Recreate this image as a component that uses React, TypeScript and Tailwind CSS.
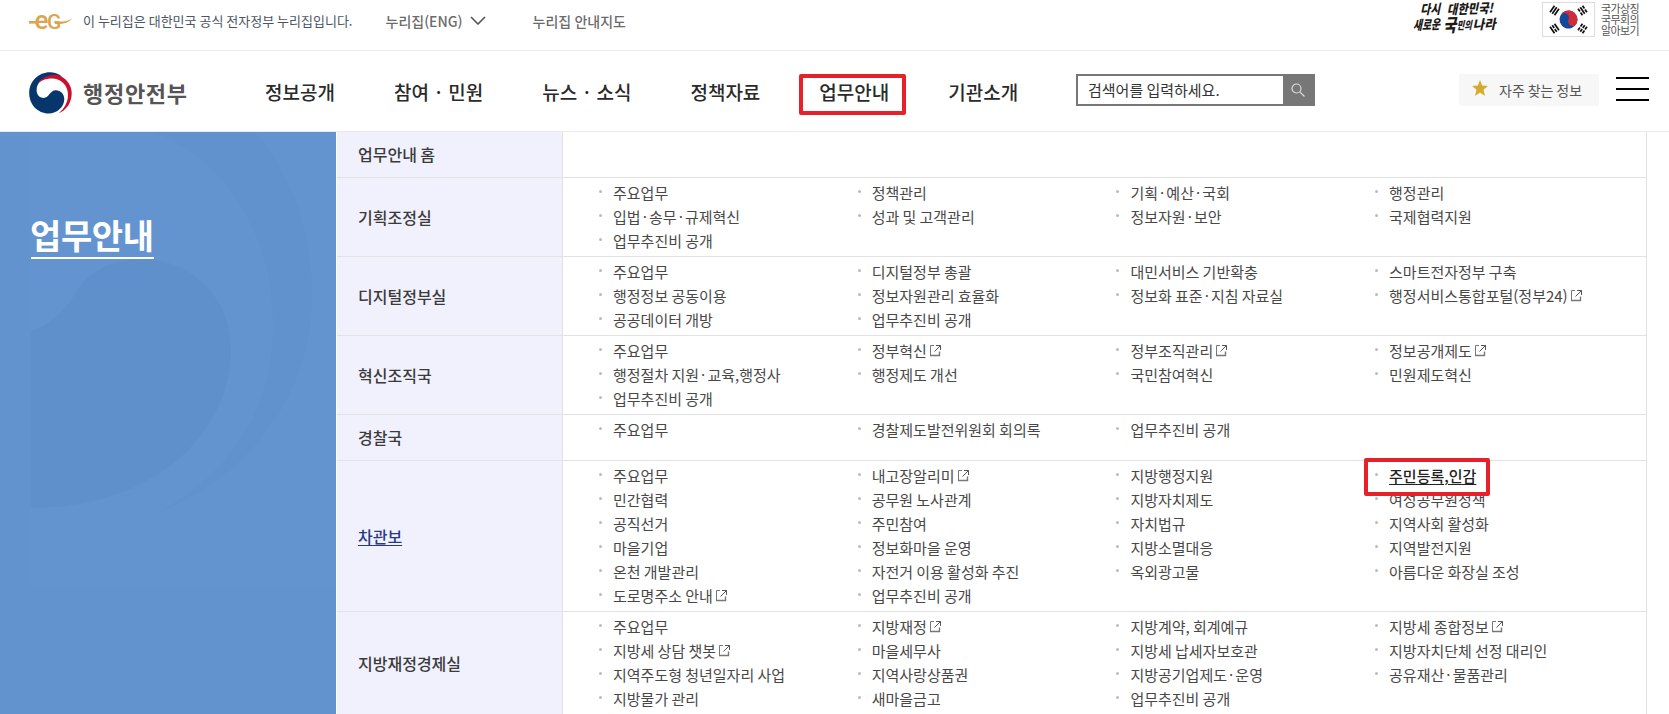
import { Fragment } from "react";

type MenuLink = { label: string; external?: boolean; active?: boolean };
type MenuRow = { title: string; height: string; active?: boolean; links: MenuLink[] };

const NAV = ["정보공개", "참여 · 민원", "뉴스 · 소식", "정책자료", "업무안내", "기관소개"];

// "^" marks a link that opens in a new window
const link = (text: string): MenuLink =>
  text.endsWith("^") ? { label: text.slice(0, -1), external: true } : { label: text };

const ROWS: MenuRow[] = [
  { title: "업무안내 홈", height: "h-[46px]", links: [] },
  {
    title: "기획조정실",
    height: "h-[79px]",
    links: [
      "주요업무", "정책관리", "기획·예산·국회", "행정관리",
      "입법·송무·규제혁신", "성과 및 고객관리", "정보자원·보안", "국제협력지원",
      "업무추진비 공개",
    ].map(link),
  },
  {
    title: "디지털정부실",
    height: "h-[79px]",
    links: [
      "주요업무", "디지털정부 총괄", "대민서비스 기반확충", "스마트전자정부 구축",
      "행정정보 공동이용", "정보자원관리 효율화", "정보화 표준·지침 자료실", "행정서비스통합포털(정부24)^",
      "공공데이터 개방", "업무추진비 공개",
    ].map(link),
  },
  {
    title: "혁신조직국",
    height: "h-[79px]",
    links: [
      "주요업무", "정부혁신^", "정부조직관리^", "정보공개제도^",
      "행정절차 지원·교육,행정사", "행정제도 개선", "국민참여혁신", "민원제도혁신",
      "업무추진비 공개",
    ].map(link),
  },
  {
    title: "경찰국",
    height: "h-[46px]",
    links: ["주요업무", "경찰제도발전위원회 회의록", "업무추진비 공개"].map(link),
  },
  {
    title: "차관보",
    height: "h-[151px]",
    active: true,
    links: [
      ...["주요업무", "내고장알리미^", "지방행정지원"].map(link),
      { label: "주민등록,인감", active: true },
      ...[
        "민간협력", "공무원 노사관계", "지방자치제도", "여성공무원정책",
        "공직선거", "주민참여", "자치법규", "지역사회 활성화",
        "마을기업", "정보화마을 운영", "지방소멸대응", "지역발전지원",
        "온천 개발관리", "자전거 이용 활성화 추진", "옥외광고물", "아름다운 화장실 조성",
        "도로명주소 안내^", "업무추진비 공개",
      ].map(link),
    ],
  },
  {
    title: "지방재정경제실",
    height: "h-[103px]",
    links: [
      "주요업무", "지방재정^", "지방계약, 회계예규", "지방세 종합정보^",
      "지방세 상담 챗봇^", "마을세무사", "지방세 납세자보호관", "지방자치단체 선정 대리인",
      "지역주도형 청년일자리 사업", "지역사랑상품권", "지방공기업제도·운영", "공유재산·물품관리",
      "지방물가 관리", "새마을금고", "업무추진비 공개",
    ].map(link),
  },
];

// Gives the middle dot a little air on both sides
function Dotted({ text, dotClass }: { text: string; dotClass: string }) {
  return (
    <>
      {text.split("·").map((part, i) => (
        <Fragment key={i}>
          {i > 0 && <span className={dotClass}>·</span>}
          {part}
        </Fragment>
      ))}
    </>
  );
}

function GovMark() {
  return (
    <svg width="44" height="24" viewBox="0 -4 44 24" className="shrink-0 overflow-visible">
      <g fontFamily="Roboto, sans-serif" fill="#d9a650">
        <text x="5.500" y="16" fontSize="26" fontWeight="500">
          e
        </text>
        <text x="18" y="16" fontSize="21" fontWeight="500">
          G
        </text>
      </g>
      <path d="M0 9.300H9" stroke="#d9a650" strokeWidth="2.600" />
      <path d="M26 8.300C32 9.300 38 8.500 43 5.500 40 9.500 34 11.500 26 11Z" fill="#d9a650" />
    </svg>
  );
}

function Emblem() {
  return (
    <svg width="43" height="42" viewBox="0 0 43 42" className="mt-[3px] shrink-0">
      <path
        d="M33 4.500C29 1.500 25 .2 21 .2 9.500.2.2 9.300.2 21S9 41.500 19.500 41.500C28.500 41.500 35.300 34.500 35.300 27 35.300 22 31.500 18.300 27 18.300 20.500 18.300 20.500 26 14.500 26 10.500 26 7.600 22.600 7.600 18.300 7.600 10 14.500 4.500 23 4.200Z"
        fill="#06366b"
      />
      <path
        d="M8.500 12.500C13 4.500 24 .2 32.500 4.600 38.500 7.900 42.700 14.300 42.700 21.300 42.700 30.500 37.500 38.500 29.500 41.300 35.500 36.500 39 30 39 23 39 13.500 32.500 7.300 24 6.600 18 6.200 12 8.200 8.500 12.500Z"
        fill="#c8102e"
      />
    </svg>
  );
}

function Slogan() {
  return (
    <svg width="84" height="37" viewBox="0 0 84 37" className="mr-[46px] shrink-0 overflow-visible">
      <g transform="rotate(-2) skewX(-14)" fill="#1d1a18" fontSize="13" fontWeight="900">
        <text x="11" y="12.500" textLength="20" lengthAdjust="spacingAndGlyphs">
          다시
        </text>
        <text x="38" y="13.500" textLength="46" lengthAdjust="spacingAndGlyphs">
          대한민국!
        </text>
        <text x="7" y="28" textLength="27" lengthAdjust="spacingAndGlyphs">
          새로운
        </text>
        <text x="38" y="31" fontSize="18" textLength="13" lengthAdjust="spacingAndGlyphs">
          국
        </text>
        <text x="51" y="29" fontSize="11" textLength="15" lengthAdjust="spacingAndGlyphs">
          민의
        </text>
        <text x="67" y="29.500" textLength="23" lengthAdjust="spacingAndGlyphs">
          나라
        </text>
      </g>
    </svg>
  );
}

function Flag() {
  return (
    <svg width="53" height="35" viewBox="0 0 53 35" className="shrink-0">
      <rect x=".5" y=".5" width="52" height="34" fill="#fff" stroke="#dcdcdc" />
      <g transform="rotate(25 26.500 17.500)">
        <circle cx="26.500" cy="17.500" r="9" fill="#14489b" />
        <path d="M17.500 17.500a9 9 0 0 1 18 0 4.500 4.500 0 0 1-9 0 4.500 4.500 0 0 0-9 0Z" fill="#cf2e38" />
      </g>
      <g stroke="#111" strokeWidth="1.700">
        <g transform="translate(12.500 8.500) rotate(-56)">
          <path d="M-4-2.700H4M-4 0H4M-4 2.700H4" />
        </g>
        <g transform="translate(40.500 26.500) rotate(-56)">
          <path d="M-4-2.700H-.5M.5-2.700H4M-4 0H-.5M.5 0H4M-4 2.700H-.5M.5 2.700H4" />
        </g>
        <g transform="translate(40.500 8.500) rotate(56)">
          <path d="M-4-2.700H-.5M.5-2.700H4M-4 0H4M-4 2.700H-.5M.5 2.700H4" />
        </g>
        <g transform="translate(12.500 26.500) rotate(56)">
          <path d="M-4-2.700H4M-4 0H-.5M.5 0H4M-4 2.700H4" />
        </g>
      </g>
    </svg>
  );
}

function ExternalIcon() {
  return (
    <svg width="12" height="12" viewBox="0 0 12 12" fill="none" className="mb-px ml-[2px] shrink-0">
      <path d="M5 .5H1.500V11" stroke="#777" />
      <path d="M1 10.500H10.500V6.500" stroke="#777" strokeWidth="1.400" />
      <path d="M7 .5H11.500V5M11.500.5L5.500 6.500" stroke="#555" />
    </svg>
  );
}

function RedFrame({ className }: { className: string }) {
  return <span className={`pointer-events-none absolute rounded-[2px] border-4 border-[#e6212a] ${className}`} />;
}

function NavItem({ label, marked }: { label: string; marked?: boolean }) {
  return (
    <a className="relative text-[19px] leading-7 font-medium whitespace-nowrap text-[#2a2a2a]">
      <Dotted text={label} dotClass="px-[1.500px]" />
      {marked && <RedFrame className="-top-[4px] -left-[20px] h-[41px] w-[107px]" />}
    </a>
  );
}

function TopBar() {
  return (
    <div className="flex h-[51px] items-start border-b border-[#ebebeb] pl-[29px]">
      <div className="flex h-[41px] items-center">
        <GovMark />
        <span className="ml-[10px] text-[13px] [word-spacing:-0.7px] text-[#4b5563]">
          이 누리집은 대한민국 공식 전자정부 누리집입니다.
        </span>
        <span className="ml-[33px] text-sm font-medium text-[#6b6b6b]">누리집(ENG)</span>
        <svg width="16" height="9" viewBox="0 0 16 9" fill="none" stroke="#555" strokeWidth="1.600" className="ml-[7px]">
          <path d="M1 1l7 7 7-7" />
        </svg>
        <span className="ml-[47px] text-sm font-medium [word-spacing:-0.7px] text-[#6b6b6b]">누리집 안내지도</span>
      </div>
      <div className="ml-auto flex pt-[2px] pr-[29px]">
        <Slogan />
        <Flag />
        <div className="ml-[6px] flex w-[39px] flex-col pt-px text-[11px] leading-[11px] tracking-[-0.6px] whitespace-nowrap text-[#555]">
          <span>국가상징</span>
          <span>국무회의</span>
          <span>알아보기</span>
        </div>
      </div>
    </div>
  );
}

function Header() {
  return (
    <header className="flex h-[81px] items-center border-b border-[#ebebeb] pt-px pr-5 pl-[29px]">
      <a className="flex w-[236px] items-center">
        <Emblem />
        <span className="ml-[11px] text-[22px] leading-8 font-bold tracking-[0.7px] text-[#555]">행정안전부</span>
      </a>
      <nav className="flex w-[811px] gap-[59px]">
        {NAV.map((item) => (
          <NavItem key={item} label={item} marked={item === "업무안내"} />
        ))}
      </nav>
      <div className="mb-[3px] flex h-8 w-[239px] items-center border-2 border-[#777]">
        <span className="flex-1 pl-[10px] text-[15px] [word-spacing:-1px] text-[#333]">검색어를 입력하세요.</span>
        <span className="flex h-8 w-[30px] items-center justify-center bg-[#777]">
          <svg width="14" height="14" viewBox="0 0 14 14" fill="none" stroke="#ddd" strokeWidth="1.200">
            <circle cx="5.500" cy="5.500" r="4.500" />
            <path d="M8.800 8.800L13.500 13.500" />
          </svg>
        </span>
      </div>
      <div className="mb-[3px] ml-auto flex h-8 w-[140px] items-center bg-[#f7f7f7] pb-px pl-[13px] text-sm whitespace-nowrap [word-spacing:-1px] text-[#555]">
        <svg width="16" height="16" viewBox="0 0 16 16" className="mr-[11px] mb-[3px]" fill="#d6aa30">
          <path d="M8 0l2.200 5.600 5.800.4-4.500 3.800L13 16 8 12.600 3 16l1.500-6.200L0 6l5.800-.4z" />
        </svg>
        자주 찾는 정보
      </div>
      <button className="mb-[5px] ml-[17px] flex w-[33px] flex-col gap-[9px]">
        <span className="h-[2px] bg-black" />
        <span className="h-[2px] bg-black" />
        <span className="h-[2px] bg-black" />
      </button>
    </header>
  );
}

function SidePanel() {
  return (
    <aside className="relative h-[582px] w-[336px] shrink-0 bg-[#6293ce] pt-[77px] pl-[31px]">
      <svg width="305" height="454" viewBox="0 0 305 454" className="absolute top-0 left-[31px]">
        <path d="M0 0H305V454H0Z" fill="#6394cf" />
        <path
          d="M0 199C22 192 36 176 48 156C62 137 82 128 110 127C160 127 200 165 200 217C200 300 125 376 0 376Z"
          fill="#5f90cb"
        />
        <path
          d="M123 0C195 30 242 100 242 195C242 270 205 340 125 381C220 345 281 260 281 165C281 100 262 45 224 0Z"
          fill="#6192cd"
        />
      </svg>
      <h2 className="relative inline-block h-[50px] border-b-2 border-white -indent-px text-[34px] leading-[52px] font-bold tracking-[-0.4px] whitespace-nowrap text-white">
        업무안내
      </h2>
    </aside>
  );
}

function LinkCell({ item }: { item: MenuLink }) {
  return (
    <li className="relative flex h-6 items-center whitespace-nowrap">
      <span className="mr-[11px] mb-[3px] size-[3px] rounded-full bg-[#bbb]" />
      <a className={item.active ? "font-medium text-[#222] underline underline-offset-2" : ""}>
        <Dotted text={item.label} dotClass="px-[2.100px]" />
      </a>
      {item.external && <ExternalIcon />}
      {item.active && <RedFrame className="-top-[6px] -left-[11px] z-10 h-[38px] w-[126px]" />}
    </li>
  );
}

function MegaMenu() {
  return (
    <div className="ml-px grid w-[1310px] grid-cols-[226px_1fr] border-r border-[#e2e2e6] text-[15px] [word-spacing:-1px] text-[#484848]">
      {ROWS.map((row) => (
        <Fragment key={row.title}>
          <div className={`flex items-center border-r border-b border-[#e2e2e6] bg-[#f1f1fe] pb-px pl-[21px] text-base font-medium ${row.height}`}>
            <span className={row.active ? "text-[#273a87] underline underline-offset-2" : "text-[#3a3a3a]"}>{row.title}</span>
          </div>
          <ul className={`grid auto-rows-[24px] grid-cols-[repeat(4,258.700px)] border-b border-[#e2e2e6] pt-[3px] pl-9 ${row.height}`}>
            {row.links.map((item) => (
              <LinkCell key={item.label} item={item} />
            ))}
          </ul>
        </Fragment>
      ))}
    </div>
  );
}

export default function App() {
  return (
    <div
      lang="ko"
      className="h-[714px] w-[1669px] overflow-hidden bg-white font-['Noto_Sans_CJK_KR','Noto_Sans_CJK_JP',sans-serif]"
    >
      <TopBar />
      <Header />
      <main className="flex h-[582px] overflow-hidden">
        <SidePanel />
        <MegaMenu />
      </main>
    </div>
  );
}
